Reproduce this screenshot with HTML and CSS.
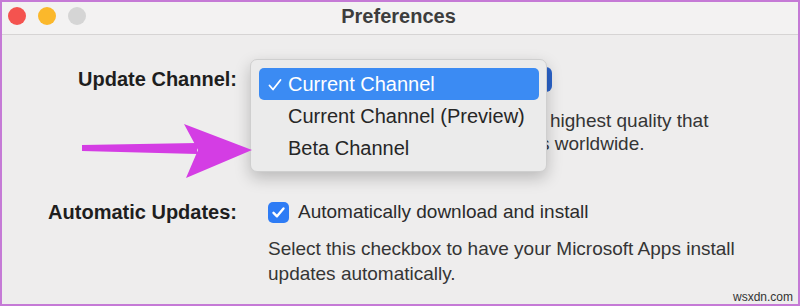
FILE: index.html
```html
<!DOCTYPE html>
<html>
<head>
  <link rel="stylesheet" href="styles.css">
</head>
<body>
  <div class="window">
    <div class="titlebar">
      <div class="lights">
        <span class="dot close"></span>
        <span class="dot minimize"></span>
        <span class="dot zoom"></span>
      </div>
      <h1 class="title">Preferences</h1>
      <div></div>
    </div>

    <div class="prefs">
      <div class="label">Update Channel:</div>
      <div class="popup"></div>
      <!-- the start of each line is hidden behind the open menu -->
      <p class="desc channel-desc">
        <span class="line first">highest quality that</span>
        <span class="line second">s worldwide.</span>
      </p>

      <div class="label auto-label">Automatic Updates:</div>
      <label class="check-row">
        <span class="checkbox">
          <svg width="21" height="21" viewBox="0 0 21 21"><path d="M5.5 10.8 L9 14.3 L15.5 6.5" fill="none" stroke="#fff" stroke-width="2.4" stroke-linecap="round" stroke-linejoin="round"/></svg>
        </span>
        Automatically download and install
      </label>
      <p class="desc auto-desc">Select this checkbox to have your Microsoft Apps install<br>updates automatically.</p>
    </div>

    <!-- open popup menu over the channel setting -->
    <ul class="menu">
      <li class="item selected">
        <svg class="tick" width="16" height="16" viewBox="0 0 16 16"><path d="M2.5 8.5 L6 12.5 L13.5 3" fill="none" stroke="#fff" stroke-width="1.8" stroke-linecap="round" stroke-linejoin="round"/></svg>
        Current Channel
      </li>
      <li class="item">Current Channel (Preview)</li>
      <li class="item">Beta Channel</li>
    </ul>

    <svg class="arrow" width="180" height="62" viewBox="80 120 180 62">
      <path d="M82 145 L197 143 L197 154 L82 151 Z" fill="#d43de4"/>
      <path d="M184 124 L252 150 L186 178 L198 150 Z" fill="#d43de4"/>
    </svg>

    <div class="watermark">wsxdn.com</div>
  </div>
</body>
</html>
```

FILE: styles.css
```css
body {
  margin: 0;
  font-family: "Liberation Sans", Arial, sans-serif;
}

.window {
  position: relative;
  box-sizing: border-box;
  width: 800px;
  height: 306px;
  border: 2px solid #c57ad6;
  background: #eeeded;
  overflow: hidden;
}

.titlebar {
  display: grid;
  grid-template-columns: 1fr auto 1fr;
  align-items: center;
  height: 33px;
  padding: 0 0 4px 6px;
  box-sizing: border-box;
  background: #f3f2f2;
  border-bottom: 1px solid #d6d4d4;
}

.lights {
  display: flex;
  gap: 12px;
}

.dot {
  width: 18px;
  height: 18px;
  border-radius: 50%;
}

.close { background: #f4534f; }
.minimize { background: #fbb82b; }
.zoom { background: #d5d5d5; }

.title {
  margin: 0;
  font-size: 20px;
  font-weight: bold;
  color: #3d3d3d;
  padding-right: 9px;
}

.prefs {
  display: grid;
  grid-template-columns: 235px auto;
  column-gap: 31px;
  padding-top: 32px;
  color: #2b2b2b;
  font-size: 19px;
}

.label {
  text-align: right;
  font-size: 20px;
  font-weight: bold;
  color: #1e1e1e;
  line-height: 25px;
}

.popup {
  width: 284px;
  height: 25px;
  border-radius: 6px;
  background: #2b63c9;
}

.desc {
  grid-column: 2;
  margin: 0;
  color: #353535;
}

.channel-desc {
  margin-top: 17px;
  line-height: 23px;
}

.line {
  display: block;
  white-space: nowrap;
}

.line.first {
  padding-left: 282px;
}

.line.second {
  padding-left: 272px;
}

.auto-label {
  margin-top: 45px;
  line-height: 24px;
}

.check-row {
  margin-top: 45px;
  display: flex;
  align-items: center;
  gap: 9px;
  height: 24px;
  color: #2b2b2b;
}

.checkbox {
  display: block;
  width: 21px;
  height: 21px;
  border-radius: 5px;
  background: #2e7cf5;
}

.checkbox svg {
  display: block;
}

.auto-desc {
  margin-top: 12px;
  line-height: 25px;
}

.menu {
  position: absolute;
  left: 248px;
  top: 57px;
  box-sizing: border-box;
  width: 297px;
  height: 113px;
  margin: 0;
  padding: 8px 7px 7px 8px;
  list-style: none;
  background: #ebebeb;
  border: 1px solid #cfcfcf;
  border-radius: 7px;
  box-shadow: 0 6px 16px rgba(0, 0, 0, 0.22);
}

.item {
  position: relative;
  height: 32px;
  line-height: 32px;
  padding-left: 29px;
  font-size: 20px;
  color: #262626;
  border-radius: 5px;
}

.item.selected {
  background: #3b8bf3;
  color: #fff;
}

.tick {
  position: absolute;
  left: 8px;
  top: 9px;
}

.arrow {
  position: absolute;
  left: 78px;
  top: 118px;
}

.watermark {
  position: absolute;
  right: 5px;
  bottom: 0;
  font-size: 12px;
  color: #333;
}
```
